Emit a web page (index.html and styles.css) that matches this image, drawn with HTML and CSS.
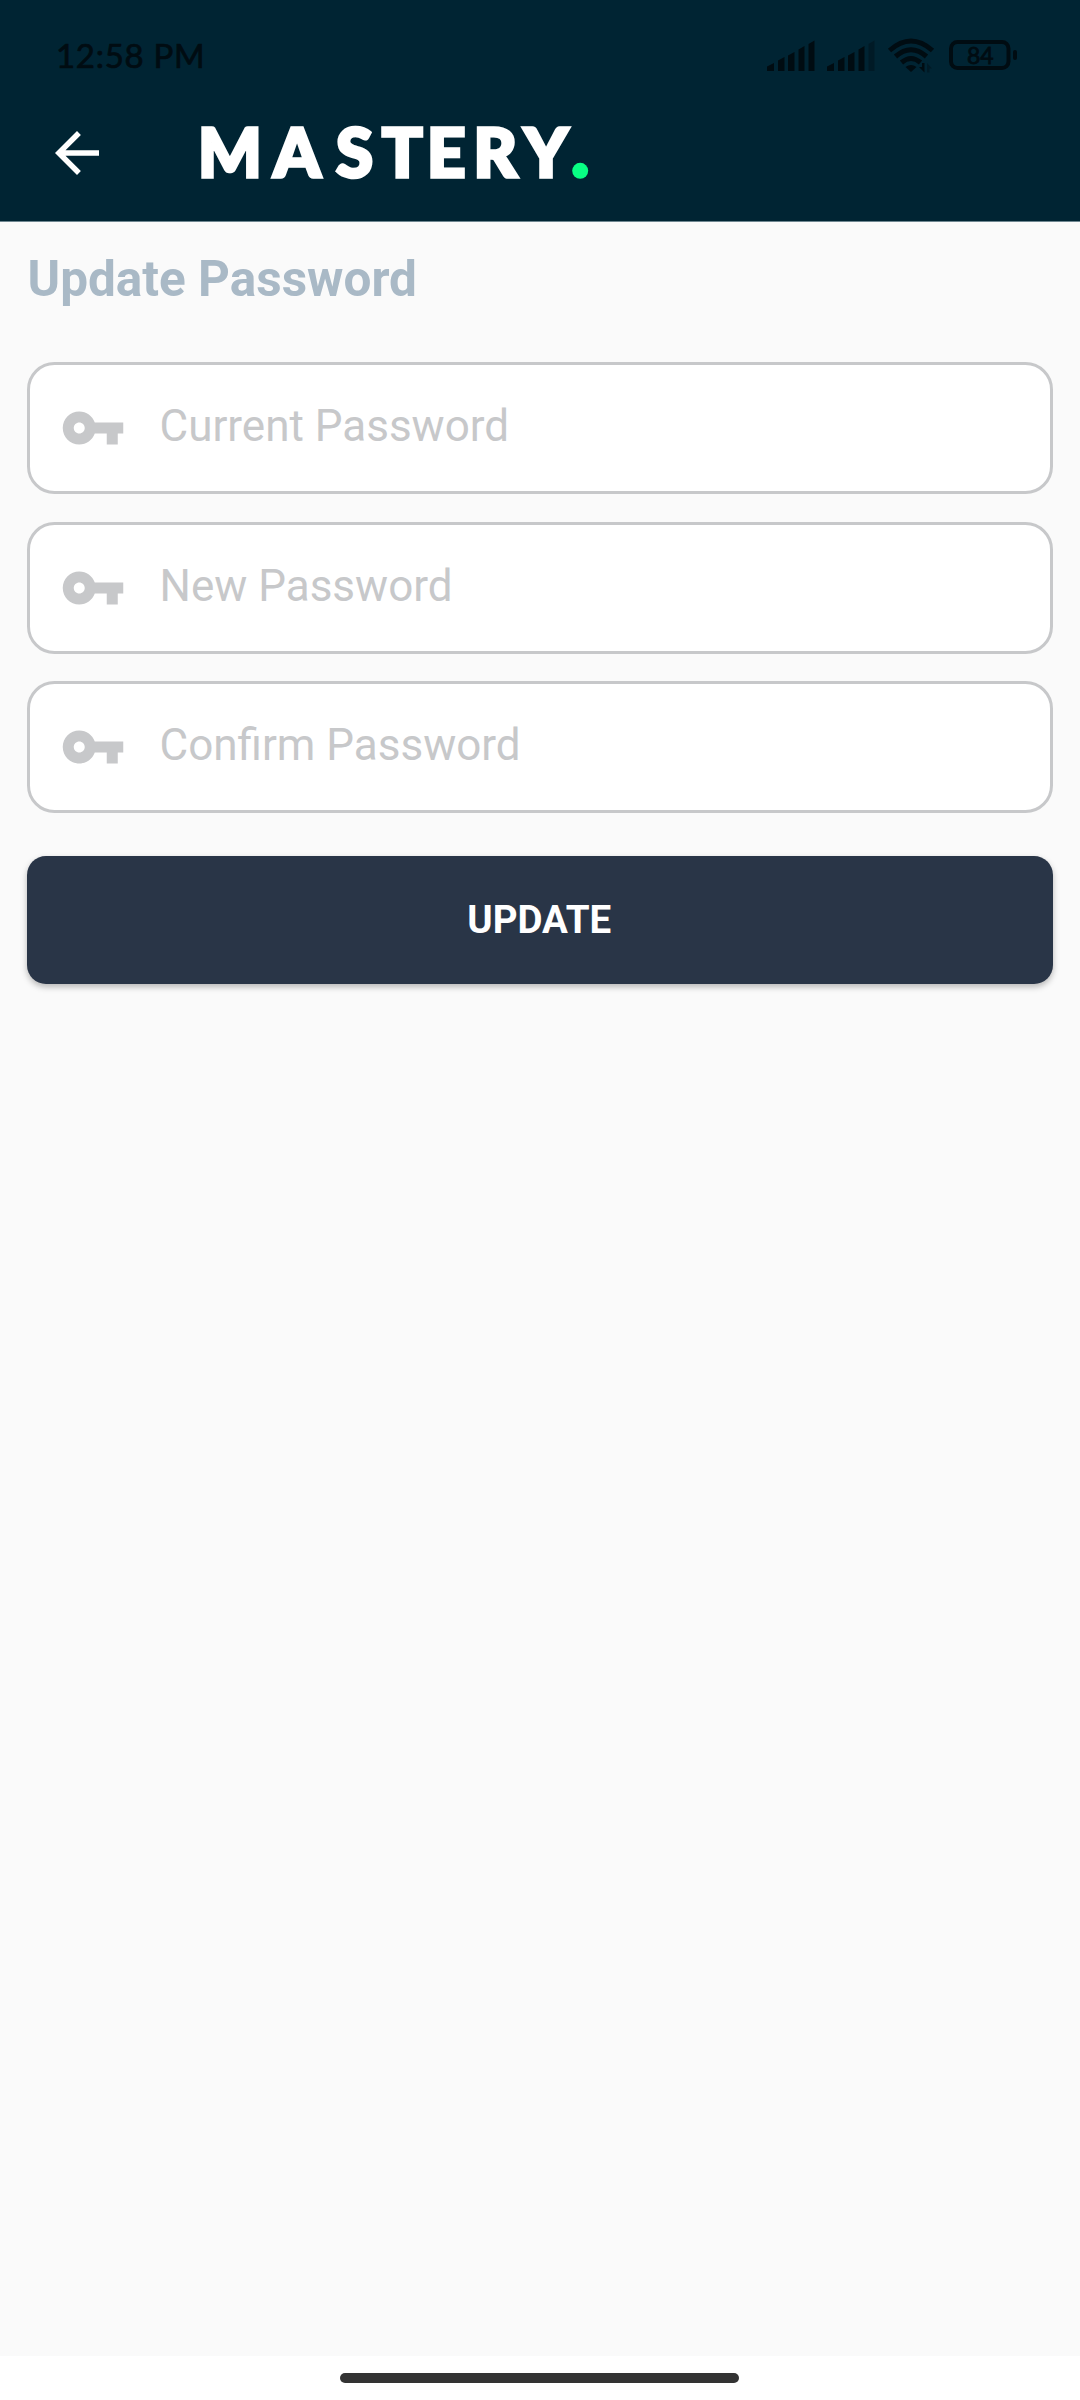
FILE: index.html
```html
<!DOCTYPE html>
<html lang="en">
<head>
<meta charset="utf-8">
<title>Update Password</title>
<link rel="stylesheet" href="styles.css">
</head>
<body>
<svg class="defs" width="0" height="0" aria-hidden="true">
  <symbol id="key" viewBox="0 0 24 24"><path d="M12.65 10C11.83 7.67 9.61 6 7 6c-3.31 0-6 2.69-6 6s2.69 6 6 6c2.61 0 4.83-1.67 5.65-4H17v4h4v-4h2v-4H12.65zM7 14c-1.1 0-2-.9-2-2s.9-2 2-2 2 .9 2 2-.9 2-2 2z"/></symbol>
</svg>
<div class="screen">
  <header class="header">
    <div class="status">
      <span class="time">12:58 PM</span>
      <svg class="status-icons" width="252" height="34" viewBox="766 38 252 34" aria-hidden="true">
        <path d="M767 71v-4.500l7-3.500v8zM778 71V60.500l6.500-3.500v14zM788 71V55.500l6.500-3.500v19zM798.500 71V49.500l6-3.500v25zM808.500 71V44l6-3.500V71z"/>
        <path d="M827 71v-4.500l7-3.500v8zM838 71V60.500l6.500-3.500v14zM848 71V55.500l6.500-3.500v19zM858.500 71V49.500l6-3.500v25z"/>
        <path class="faint" d="M868.500 71V44l6-3.500V71z"/>
        <path class="line wifi" d="M889.500 50.500Q911 31.500 932.500 50.500M895.500 56.500Q911 43 926.500 56.500M901.500 62.500Q911 54.500 920.500 62.500"/>
        <path d="M905.500 67Q911 63 916.500 67L911 72z"/>
        <path d="M924.500 63v9.500l-5.500-5.500h3V63z"/>
        <path class="faint" d="M927 72.500V63l5 5.500h-2.500v4z"/>
        <rect class="line" x="951" y="42" width="57.500" height="26" rx="6.500"/>
        <rect x="1013" y="50" width="4" height="10" rx="2"/>
        <text class="level" x="967" y="63.500">84</text>
      </svg>
    </div>
    <div class="toolbar">
      <svg class="back" viewBox="0 0 24 24" aria-label="Back"><path d="M20 11H7.830l5.590-5.590L12 4l-8 8 8 8 1.410-1.410L7.830 13H20v-2z"/></svg>
      <svg class="logo" width="400" height="96" viewBox="194 105 400 96" aria-label="Mastery">
        <text y="176.500" x="198 273.500 336 382 427 473.500 524">MASTERY</text>
        <circle cx="580.200" cy="170.800" r="8"/>
      </svg>
    </div>
  </header>
  <main class="content">
    <h1 class="title">Update Password</h1>
    <form class="form">
      <label class="field"><svg class="key"><use href="#key"/></svg><input class="input" type="password" placeholder="Current Password"></label>
      <label class="field"><svg class="key"><use href="#key"/></svg><input class="input" type="password" placeholder="New Password"></label>
      <label class="field"><svg class="key"><use href="#key"/></svg><input class="input" type="password" placeholder="Confirm Password"></label>
      <button class="submit" type="button">UPDATE</button>
    </form>
  </main>
  <footer class="nav"><div class="handle"></div></footer>
</div>
</body>
</html>
```
FILE: styles.css
```css
* { box-sizing: border-box; }
body { margin: 0; font-family: Roboto, sans-serif; background: #fafafa; }
.defs { position: absolute; }
.screen { display: flex; flex-direction: column; width: 1080px; height: 2400px; }

.header { height: 222px; background: #002433; border-bottom: 1px solid #6f8791; }
.status { display: flex; justify-content: space-between; align-items: flex-start; height: 120px; padding: 38px 62px 0 56px; color: #000c12; }
.time { margin-top: -1px; font: 400 33px/37px Lato, sans-serif; letter-spacing: 0.7px; -webkit-text-stroke: 0.7px #000c12; }
.status-icons { fill: #000c12; overflow: visible; }
.status-icons .faint { fill: #001a26; }
.status-icons .line { fill: none; stroke: #000c12; stroke-width: 4; }
.status-icons .wifi { stroke-width: 5; }
.level { font: 400 23px Lato, sans-serif; stroke: #000c12; stroke-width: 0.8px; }
.toolbar { display: flex; align-items: center; gap: 84px; height: 66px; padding-left: 44px; }
.back { width: 66px; height: 66px; fill: #fff; }
.logo { overflow: visible; }
.logo text { font: 900 67px Lato, sans-serif; fill: #fff; stroke: #fff; stroke-width: 3.5px; stroke-linejoin: miter; }
.logo circle { fill: #08ff84; }

.content { flex: 1; padding: 28px 27.5px 0 27px; }
.title { margin: 0; font-size: 49.5px; line-height: 58px; font-weight: 700; color: #a9b9c6; text-indent: 0.5px; }
.form { display: flex; flex-direction: column; gap: 27.5px; margin-top: 54px; }
.field { display: flex; align-items: center; height: 132px; padding-left: 30px; border: 3px solid #c7c8ca; border-radius: 27.5px; background: #fff; }
.key { width: 66px; height: 66px; fill: #c7c8ca; }
.input { flex: 1; height: 60px; margin: 0 0 4px 33.5px; padding: 0; border: 0; outline: 0; background: none; font: 400 44px Roboto, sans-serif; }
.input::placeholder { color: #c7c8ca; opacity: 1; }
.submit { height: 127.5px; margin-top: 15.5px; padding: 0 1px 0 0; border: 0; border-radius: 19px; background: #293547; color: #fff; font: 700 38.5px Roboto, sans-serif; box-shadow: 0 3px 6px rgba(0, 0, 0, 0.27); }

.nav { display: flex; justify-content: center; align-items: flex-start; height: 44px; padding: 17px 1px 0 0; background: #fff; }
.handle { width: 399px; height: 10px; border-radius: 5px; background: #333; }
```
